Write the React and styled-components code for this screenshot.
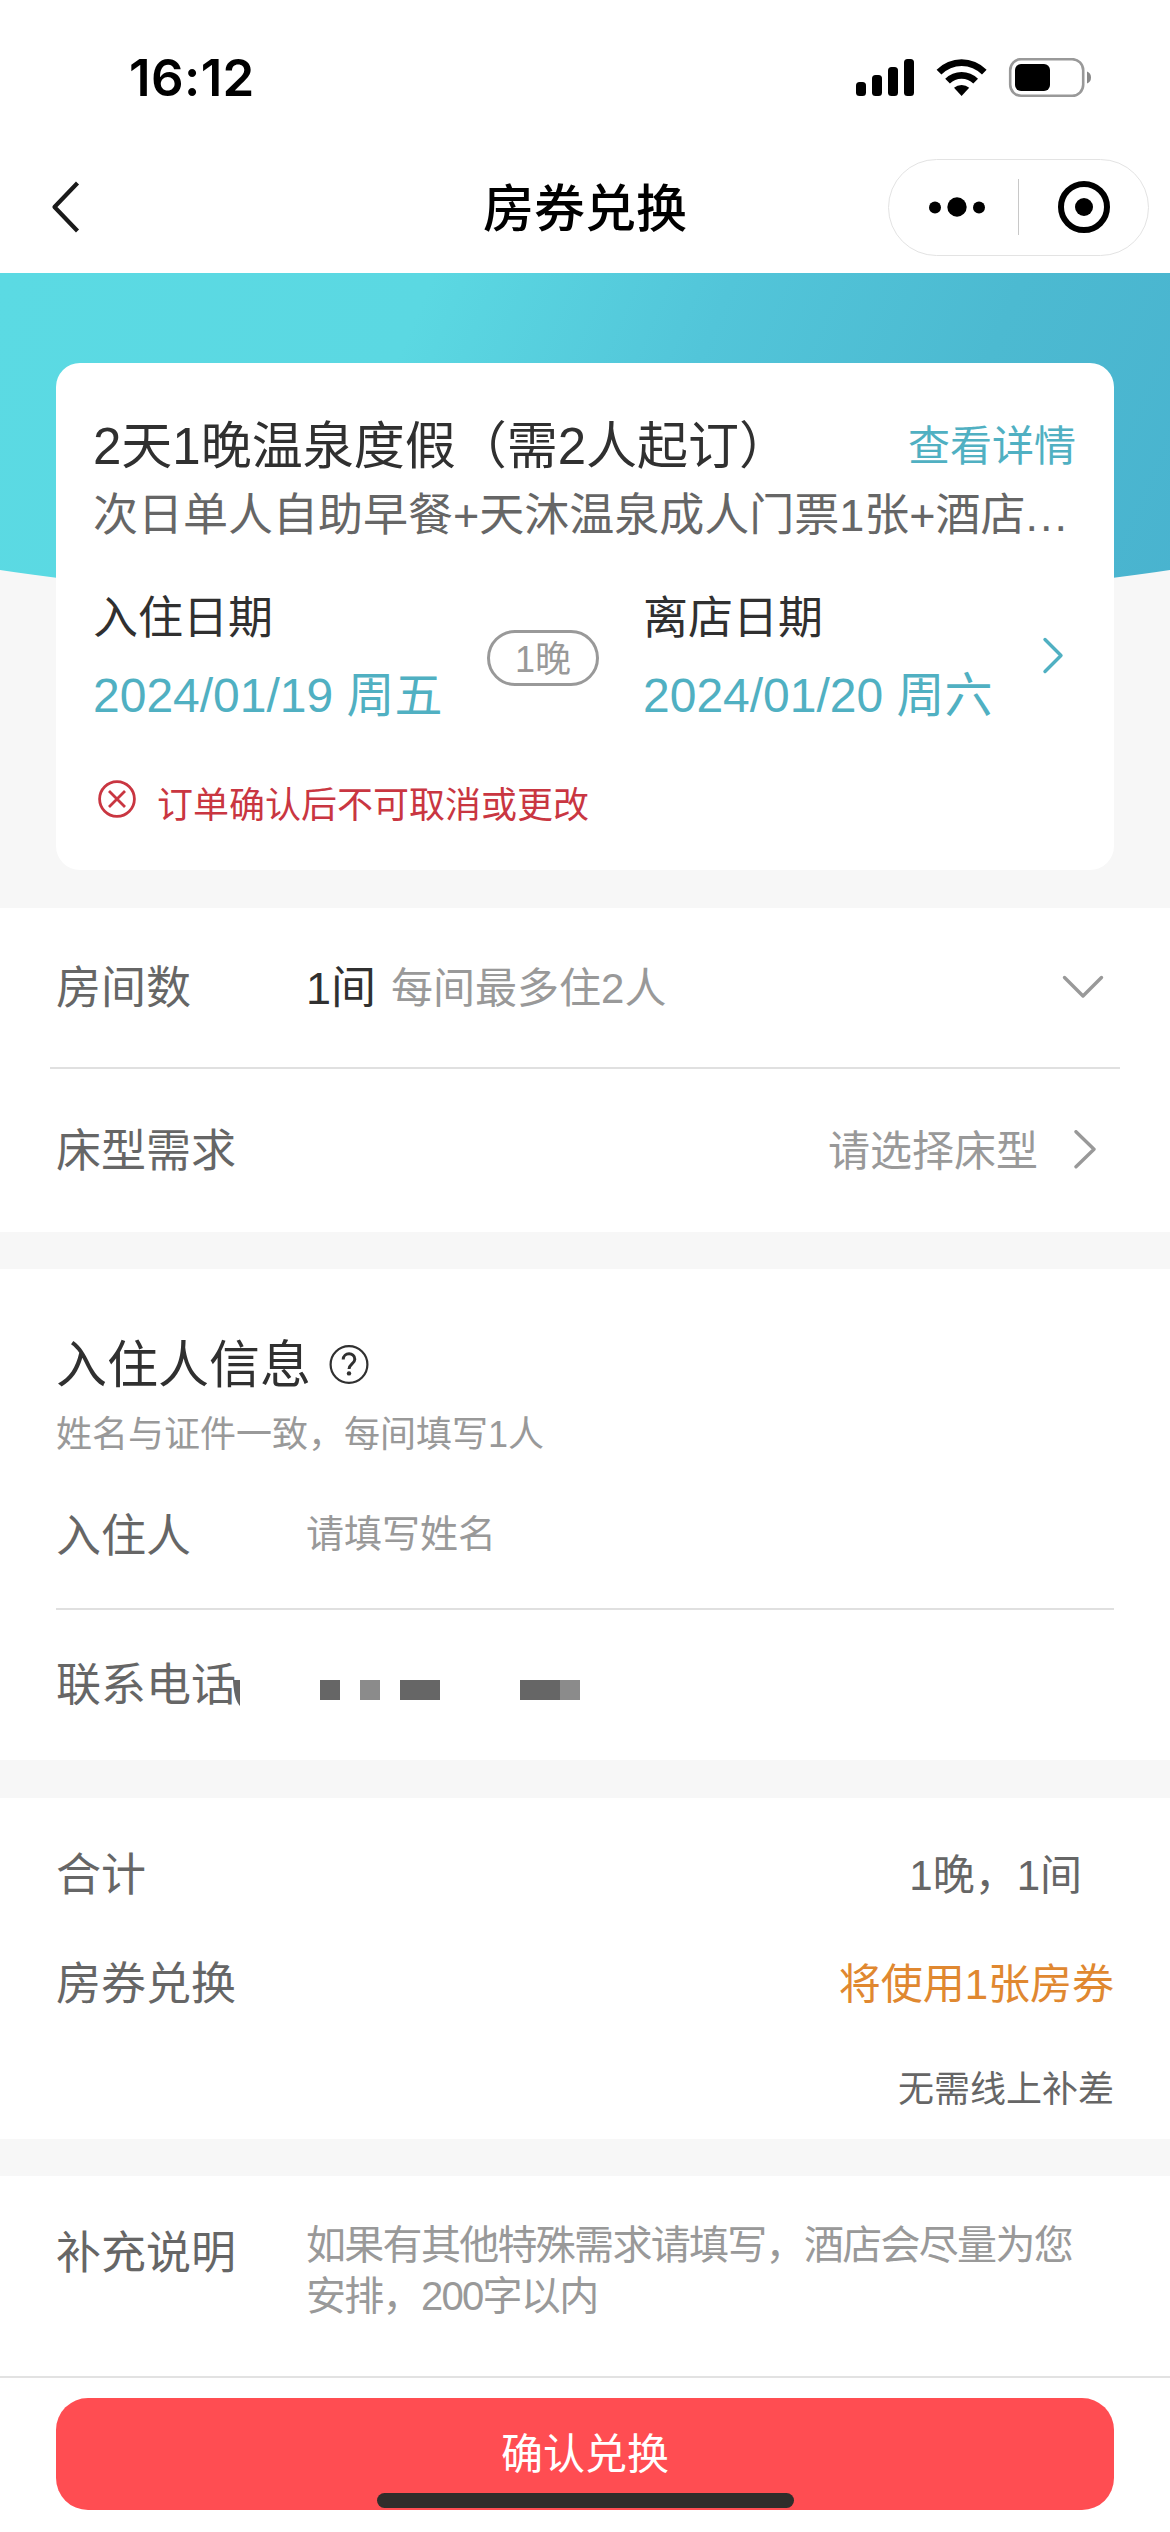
import styled, { createGlobalStyle } from "styled-components";

const GlobalStyle = createGlobalStyle`
  * {
    box-sizing: border-box;
  }

  body {
    margin: 0;
    background: #f7f7f7;
    font-family: "Liberation Sans", "Noto Sans CJK SC", sans-serif;
    color: #303030;
  }
`

const Page = styled.main`
  position: relative;
  width: 1170px;
  height: 2532px;
  overflow: hidden;
  background: #f7f7f7;
`

/* ---------- header ---------- */

const Header = styled.header`
  height: 273px;
  background: #fff;
`

const StatusBar = styled.div`
  display: flex;
  justify-content: space-between;
  align-items: center;
  height: 156px;
  padding: 0 79px 0 129px;
`

const Time = styled.span`
  font-family: Inter, sans-serif;
  font-size: 51px;
  font-weight: 600;
  line-height: 60px;
  letter-spacing: 0.4px;
  color: #000;
`

const NavBar = styled.nav`
  display: grid;
  grid-template-columns: 1fr auto 1fr;
  align-items: center;
  height: 102px;
  padding: 0 21px 0 50px;
`

const NavTitle = styled.h1`
  margin: 0 0 0 -29px;
  padding-top: 5px;
  font-size: 51px;
  font-weight: 500;
  line-height: 60px;
  color: #000;
`

const Capsule = styled.div`
  justify-self: end;
  display: flex;
  align-items: center;
  width: 261px;
  height: 97px;
  border: 1px solid #e3e3e3;
  border-radius: 49px;
`

const CapsuleButton = styled.button`
  display: flex;
  justify-content: center;
  align-items: center;
  flex: none;
  width: 129px;
  padding: 0 0 0 ${({ $shift }) => $shift || 0}px;
  border: none;
  background: transparent;
`

const CapsuleLine = styled.div`
  width: 1px;
  height: 56px;
  background: #c8c8c8;
`

/* ---------- order card ---------- */

const Hero = styled.section`
  position: relative;
  padding: 90px 56px 38px;
`

const HeroBackdrop = styled.div`
  position: absolute;
  top: 0;
  left: 0;
  width: 100%;
  height: 338px;
  background: linear-gradient(113deg, #5bdae3 0%, #5bd8e2 33%, #52c5d9 56%, #4cbad1 78%, #49b3cf 100%);
  clip-path: ellipse(1170px 306px at 50% 32px);
`

const Card = styled.div`
  position: relative;
  height: 507px;
  padding: 54px 38px 40px 37px;
  border-radius: 24px;
  background: #fff;
`

const CardHead = styled.div`
  display: flex;
  justify-content: space-between;
  line-height: 60px;
`

const CardTitle = styled.h2`
  margin: 0;
  font-size: 51px;
  font-weight: 400;
  white-space: nowrap;
`

const DetailLink = styled.a`
  font-size: 42px;
  line-height: 59px;
  color: #50b0c2;
`

const Package = styled.p`
  margin: 9px 0 0;
  overflow: hidden;
  font-size: 45px;
  line-height: 60px;
  white-space: nowrap;
  color: #666;
`

const Dots = styled.span`
  letter-spacing: 2px;
`

const Stay = styled.div`
  display: flex;
  align-items: center;
  margin-top: 43px;
`

const StayDate = styled.div`
  display: flex;
  flex-direction: column;
  gap: 17px;
  width: ${({ $width }) => $width}px;
  line-height: 60px;
`

const StayLabel = styled.span`
  font-size: 45px;
`

const StayValue = styled.span`
  font-size: 48px;
  white-space: nowrap;
  color: #50b0c2;
`

const Nights = styled.span`
  width: 112px;
  height: 56px;
  margin: 1px 44px 0 0;
  border: 3px solid #999;
  border-radius: 28px;
  font-size: 36px;
  line-height: 53px;
  text-align: center;
  color: #999;
`

const Warning = styled.div`
  display: flex;
  gap: 21px;
  margin-top: 54px;
  padding-left: 5px;
  font-size: 36px;
  line-height: 52px;
  color: #c93641;
`

/* ---------- form sections ---------- */

const Section = styled.section`
  margin-bottom: ${({ $gap }) => $gap}px;
  padding: ${({ $pad }) => $pad};
  background: #fff;
`

const Row = styled.div`
  position: relative;
  display: flex;
  align-items: center;
  height: ${({ $height }) => $height}px;
  padding: 2px ${({ $right }) => $right || 0}px 0 ${({ $left }) => $left || 0}px;
  border-bottom: ${({ $line }) => ($line ? '2px solid #e0e0e0' : 'none')};
`

const Label = styled.label`
  flex: none;
  width: 250px;
  font-size: 45px;
  line-height: ${({ $lineHeight }) => $lineHeight || 60}px;
  color: #666;
`

const Value = styled.span`
  margin-left: ${({ $end }) => ($end ? 'auto' : '0')};
  margin-right: ${({ $right }) => $right || 0}px;
  font-size: ${({ $size }) => $size || 42}px;
  line-height: 60px;
  color: ${({ $color }) => $color || '#999'};
`

const Placeholder = styled.span`
  padding-bottom: 6px;
  font-size: 38px;
  line-height: 60px;
  color: #999;
`

const ChevronBox = styled.span`
  display: flex;
  margin-left: ${({ $push }) => ($push ? 'auto' : '0')};
`

const SectionTitle = styled.h2`
  display: flex;
  align-items: center;
  gap: 17px;
  margin: 0;
  font-size: 51px;
  font-weight: 400;
  line-height: 61px;
`

const Hint = styled.p`
  margin: 15px 0 5px;
  font-size: 36px;
  line-height: 48px;
  color: #999;
`

const PhoneMask = styled.svg`
  margin: 8px 0 0 14px;
`

const MaskEdge = styled.svg`
  position: absolute;
  left: 177px;
  top: 70px;
`

const Note = styled.div`
  display: flex;
  align-items: flex-start;
`

const NoteText = styled.p`
  width: 790px;
  margin: 0;
  font-size: 40px;
  line-height: 51px;
  letter-spacing: -1.7px;
  color: #999;
`

/* ---------- footer ---------- */

const Footer = styled.footer`
  height: 156px;
  padding: 20px 56px 0;
  border-top: 2px solid #e2e2e2;
  background: #fff;
`

const ConfirmButton = styled.button`
  display: block;
  width: 100%;
  height: 112px;
  padding: 2px 0 0;
  border: none;
  border-radius: 32px;
  background: #ff4d52;
  font-family: inherit;
  font-size: 42px;
  line-height: 110px;
  color: #fff;
`

const HomeIndicator = styled.div`
  position: absolute;
  left: 377px;
  bottom: 24px;
  width: 417px;
  height: 15px;
  border-radius: 8px;
  background: #302d2b;
`

const StatusIcons = () => (
  <svg width="235" height="40" viewBox="0 0 235 40">
    <rect x="0" y="24" width="10" height="14" rx="3.5" />
    <rect x="16" y="17" width="10" height="21" rx="3.5" />
    <rect x="32" y="9" width="10" height="29" rx="3.5" />
    <rect x="48" y="1" width="10" height="37" rx="3.5" />
    <path d="M80.6 11.8 A35 35 0 0 1 130.6 11.8 L126 16.6 A28.5 28.5 0 0 0 85.4 16.6 Z" />
    <path d="M89.2 20.8 A23.4 23.4 0 0 1 122 20.8 L117.3 25.6 A16.8 16.8 0 0 0 93.9 25.6 Z" />
    <path d="M98 29.8 A11.5 11.5 0 0 1 113.2 29.8 L105.6 38 Z" />
    <rect x="154.2" y="1.2" width="73" height="36.6" rx="11" fill="none" stroke="#999" strokeWidth="2.6" />
    <rect x="159" y="6" width="35" height="27" rx="6" />
    <path d="M231 13.5 Q235 15 235 19.5 Q235 24 231 25.5 Z" fill="#888" />
  </svg>
)

const Back = () => (
  <svg width="32" height="52" viewBox="0 0 32 52" fill="none" stroke="#1a1a1a" strokeWidth="4.2">
    <path d="M27.5 2 L4.5 26 L27.5 50" strokeLinejoin="round" />
  </svg>
)

const More = () => (
  <svg width="58" height="22" viewBox="0 0 58 22">
    <circle cx="7" cy="11.5" r="6" />
    <circle cx="29" cy="11" r="9.7" />
    <circle cx="51" cy="11.5" r="6" />
  </svg>
)

const Target = () => (
  <svg width="54" height="54" viewBox="0 0 54 54">
    <circle cx="27" cy="27" r="23" fill="none" stroke="#000" strokeWidth="6" />
    <circle cx="27" cy="27" r="9" />
  </svg>
)

const Chevron = ({ d, color = '#999' }) => (
  <svg width="44" height="44" viewBox="0 0 44 44" fill="none" stroke={color} strokeWidth="3.4" strokeLinejoin="round" strokeLinecap="round">
    <path d={d} />
  </svg>
)

const CancelIcon = () => (
  <svg width="38" height="38" viewBox="0 0 38 38" fill="none" stroke="currentColor" strokeWidth="2.8">
    <circle cx="19" cy="19" r="17.4" />
    <path d="M11 11 L27 27 M27 11 L11 27" />
  </svg>
)

const HelpIcon = () => (
  <svg width="42" height="42" viewBox="0 0 42 42" fill="none" stroke="#303030" strokeWidth="2.2">
    <circle cx="21" cy="18.5" r="18.4" transform="translate(0 1)" />
    <path d="M15.2 14.6 C15.2 7 26.8 7 26.8 14.2 C26.8 18.6 21 19.2 21 24" strokeWidth="3" />
    <circle cx="21" cy="28.4" r="2.2" fill="#303030" stroke="none" />
  </svg>
)

const phoneBlocks = [
  { x: 0, width: 20, fill: '#666' },
  { x: 40, width: 20, fill: '#8b8b8b' },
  { x: 80, width: 40, fill: '#666' },
  { x: 200, width: 40, fill: '#666' },
  { x: 240, width: 20, fill: '#8b8b8b' },
]

export default function App() {
  return (
    <Page>
      <GlobalStyle />

      <Header>
        <StatusBar>
          <Time>16:12</Time>
          <StatusIcons />
        </StatusBar>
        <NavBar>
          <Back />
          <NavTitle>房券兑换</NavTitle>
          <Capsule>
            <CapsuleButton $shift={7}><More /></CapsuleButton>
            <CapsuleLine />
            <CapsuleButton><Target /></CapsuleButton>
          </Capsule>
        </NavBar>
      </Header>

      <Hero>
        <HeroBackdrop />
        <Card>
          <CardHead>
            <CardTitle>2天1晚温泉度假（需2人起订）</CardTitle>
            <DetailLink>查看详情</DetailLink>
          </CardHead>
          <Package>次日单人自助早餐+天沐温泉成人门票1张+酒店<Dots>...</Dots></Package>
          <Stay>
            <StayDate $width={394}>
              <StayLabel>入住日期</StayLabel>
              <StayValue>2024/01/19 周五</StayValue>
            </StayDate>
            <Nights>1晚</Nights>
            <StayDate $width={387}>
              <StayLabel>离店日期</StayLabel>
              <StayValue>2024/01/20 周六</StayValue>
            </StayDate>
            <Chevron d="M15 3.5 L31 19.5 L15 35.5" color="#50b0c2" />
          </Stay>
          <Warning>
            <CancelIcon />
            <span>订单确认后不可取消或更改</span>
          </Warning>
        </Card>
      </Hero>

      <Section $gap={37} $pad="0 50px">
        <Row $height={161} $left={6} $right={15} $line>
          <Label>房间数</Label>
          <Value $size={45} $color="#303030" $right={15}>1间</Value>
          <Value>每间最多住2人</Value>
          <ChevronBox $push>
            <Chevron d="M3.5 10.5 L22 29 L40.5 10.5" />
          </ChevronBox>
        </Row>
        <Row $height={163} $left={6} $right={15}>
          <Label>床型需求</Label>
          <Value $end $right={23}>请选择床型</Value>
          <ChevronBox>
            <Chevron d="M15 1.7 L33 19.2 L15 36.7" />
          </ChevronBox>
        </Row>
      </Section>

      <Section $gap={38} $pad="66px 56px 0">
        <SectionTitle>入住人信息<HelpIcon /></SectionTitle>
        <Hint>姓名与证件一致，每间填写1人</Hint>
        <Row $height={146} $line>
          <Label>入住人</Label>
          <Placeholder>请填写姓名</Placeholder>
        </Row>
        <Row $height={150}>
          <Label>联系电话</Label>
          <MaskEdge width="7" height="26" viewBox="0 0 7 26">
            <path d="M0 0 H7 V26 Q1 20 0 0 Z" fill="#666" />
          </MaskEdge>
          <PhoneMask width="260" height="20" viewBox="0 0 260 20" shapeRendering="crispEdges">
            {phoneBlocks.map(block => (
              <rect key={block.x} x={block.x} y="0" width={block.width} height="20" fill={block.fill} />
            ))}
          </PhoneMask>
        </Row>
      </Section>

      <Section $gap={37} $pad="22px 56px 0">
        <Row $height={109}>
          <Label>合计</Label>
          <Value $end $right={32} $color="#666">1晚，1间</Value>
        </Row>
        <Row $height={109}>
          <Label>房券兑换</Label>
          <Value $end $color="#e08830">将使用1张房券</Value>
        </Row>
        <Row $height={101}>
          <Value $end $size={36} $color="#666">无需线上补差</Value>
        </Row>
      </Section>

      <Section $gap={0} $pad="44px 56px 54px">
        <Note>
          <Label $lineHeight={67}>补充说明</Label>
          <NoteText>如果有其他特殊需求请填写，酒店会尽量为您安排，200字以内</NoteText>
        </Note>
      </Section>

      <Footer>
        <ConfirmButton>确认兑换</ConfirmButton>
      </Footer>
      <HomeIndicator />
    </Page>
  )
}
